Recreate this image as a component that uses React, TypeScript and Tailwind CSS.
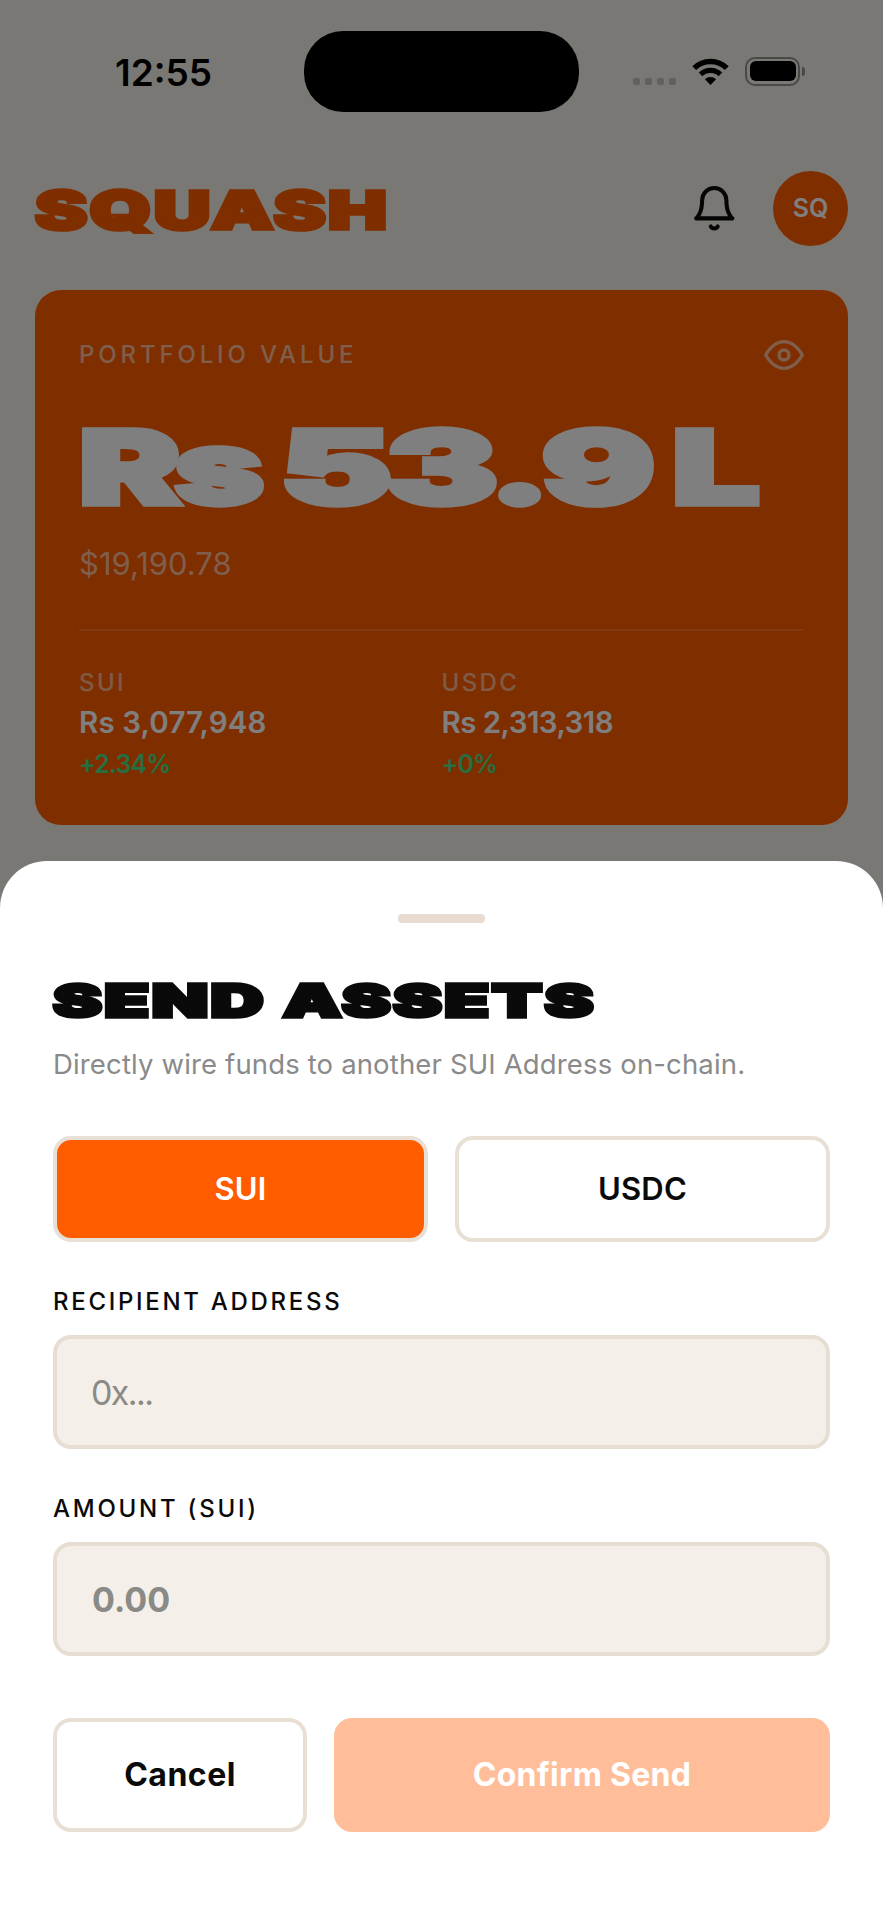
import { useState } from 'react';
import clsx from 'clsx';

const holdings = [
    { symbol: 'SUI', value: 'Rs 3,077,948', change: '+2.34%', valueClass: 'tracking-[0.15px]', changeClass: 'tracking-[-0.9px]' },
    { symbol: 'USDC', value: 'Rs 2,313,318', change: '+0%', valueClass: 'tracking-[-0.55px]', changeClass: 'tracking-[-0.9px]' },
];

function WifiIcon() {
    return (
        <svg width="37" height="27" viewBox="0 0 37 27" fill="none" stroke="black">
            <path d="M2.2 10.2a23 23 0 0 1 32.6 0" strokeWidth="5.4" />
            <path d="M8.6 16.4a14.2 14.2 0 0 1 19.8 0" strokeWidth="5.2" />
            <path d="M18.5 27l-5.6-5.7a8 8 0 0 1 11.2 0z" fill="black" stroke="none" />
        </svg>
    );
}

function BellIcon() {
    return (
        <svg width="48.5" height="48.5" viewBox="0 0 24 24" fill="none" stroke="#0a0a0a" strokeWidth="2" strokeLinecap="round" strokeLinejoin="round">
            <path d="M18 8A6 6 0 0 0 6 8c0 7-3 9-3 9h18s-3-2-3-9" />
            <path d="M13.73 21a2 2 0 0 1-3.46 0" />
        </svg>
    );
}

function EyeIcon() {
    return (
        <svg width="40" height="40" viewBox="0 0 24 24" fill="none" stroke="white" strokeOpacity="0.6" strokeWidth="2" strokeLinecap="round" strokeLinejoin="round">
            <path d="M1 12s4-8 11-8 11 8 11 8-4 8-11 8-11-8-11-8z" />
            <circle cx="12" cy="12" r="3" />
        </svg>
    );
}

function StatusBar() {
    return (
        <div className="grid h-[142px] grid-cols-[304px_275px_1fr] items-center">
            <span className="pt-0.5 pl-[115px] text-[37px] leading-none font-semibold text-black">12:55</span>
            <div className="h-[81px] rounded-[39px] bg-black" />
            <div className="flex h-[28px] items-center pl-[54px]">
                <div className="flex gap-[5px] self-end">
                    {[0, 1, 2, 3].map((i) => (
                        <span key={i} className="size-[7px] rounded-[2px] bg-black/20" />
                    ))}
                </div>
                <div className="ml-4"><WifiIcon /></div>
                <div className="ml-4 flex h-[29px] w-[55px] rounded-[10px] border-2 border-black/40 p-[2.5px]">
                    <div className="flex-1 rounded-[6px] bg-black" />
                </div>
                <div className="ml-0.5 h-[9px] w-[3px] rounded-r-full bg-black/40" />
            </div>
        </div>
    );
}

function PortfolioCard() {
    return (
        <div className="mx-[35px] mt-11 h-[535px] rounded-[26px] bg-[#ff5c00] px-11 pt-[45px]">
            <div className="flex h-10 items-center justify-between">
                <span className="text-[24px] font-medium tracking-[3.85px] text-white/60">PORTFOLIO VALUE</span>
                <EyeIcon />
            </div>

            <div className="mt-[38px] flex h-[108px] items-center text-[102px] leading-none font-black tracking-[-4px] whitespace-nowrap text-white [-webkit-text-stroke:5.5px_white]">
                <span className="w-[201px] origin-left scale-x-[1.49]">Rs </span>
                <span className="w-[392px] origin-left scale-x-[1.65]">53.9 </span>
                <span className="origin-left scale-x-[1.52]">L</span>
            </div>
            <p className="mt-[23px] h-10 text-[31px] leading-10 text-white/60">$19,190.78</p>

            <div className="mt-[45px] grid grid-cols-2 border-t-2 border-white/15 pt-[36px]">
                {holdings.map((h) => (
                    <div key={h.symbol}>
                        <p className="text-[24px] leading-8 font-medium tracking-[2.4px] text-white/55">{h.symbol}</p>
                        <p className={clsx('mt-[3px] text-[29.5px] leading-10 font-semibold text-white', h.valueClass)}>{h.value}</p>
                        <p className={clsx('mt-1.5 text-[25px] leading-8 font-semibold text-[#4ade80]', h.changeClass)}>{h.change}</p>
                    </div>
                ))}
            </div>
        </div>
    );
}

export default function App() {
    const [asset, setAsset] = useState('SUI');

    return (
        <div className="relative h-[1920px] w-[883px] overflow-hidden bg-[#f5f0e8] font-[Inter,sans-serif]">
            <StatusBar />

            {/* Header */}
            <header className="mt-[29px] flex h-[75px] items-center justify-between px-[35px]">
                <h1 className="origin-left scale-x-[1.51] pt-[5px] text-[52px] leading-none font-black tracking-[1.5px] text-[#ff5c00] [-webkit-text-stroke:3.5px_#ff5c00]">SQUASH</h1>
                <div className="flex items-center gap-[35px]">
                    <BellIcon />
                    <div className="flex size-[75px] items-center justify-center rounded-full bg-[#ff5c00] text-[25px] font-semibold text-white">SQ</div>
                </div>
            </header>

            <PortfolioCard />

            <div className="absolute inset-0 bg-black/50" />

            {/* Send sheet */}
            <section className="absolute inset-x-0 bottom-0 h-[1059px] rounded-t-[47px] bg-white px-[53px] pt-[53px] text-[#0a0a0a]">
                <div className="mx-auto h-[9px] w-[87px] rounded-[4px] bg-[#e8dcd2]" />
                <h2 className="mt-[53px] w-fit origin-left scale-x-[1.63] text-[45px] leading-[50px] font-black tracking-[1.5px] whitespace-nowrap [-webkit-text-stroke:3.5px_#0a0a0a]">SEND ASSETS</h2>
                <p className="mt-[20px] text-[27.5px] leading-9 tracking-[0.15px] whitespace-nowrap text-[#8a8a8a]">Directly wire funds to another SUI Address on-chain.</p>

                <div className="mt-[54px] grid grid-cols-2 gap-[27px]">
                    {['SUI', 'USDC'].map((a) => (
                        <button
                            key={a}
                            onClick={() => setAsset(a)}
                            className={clsx(
                                'h-[106px] rounded-[18px] border-4 border-[#e8dfd5] text-[31px] font-semibold tracking-[0.2px]',
                                asset === a ? 'bg-[#ff5c00] text-white' : 'bg-white'
                            )}
                        >
                            {a}
                        </button>
                    ))}
                </div>

                <p className="mt-[45px] text-[24px] leading-[30px] font-medium tracking-[2.7px]">RECIPIENT ADDRESS</p>
                <div className="mt-[18px] flex h-[114px] items-center rounded-[18px] border-4 border-[#e6ddd3] bg-[#f5efe9] px-[34px] text-[34px] tracking-[-1.6px] text-[#8a8a86]">0x...</div>

                <p className="mt-[45px] text-[24px] leading-[30px] font-medium tracking-[2.75px]">AMOUNT ({asset})</p>
                <div className="mt-[18px] flex h-[114px] items-center rounded-[18px] border-4 border-[#e6ddd3] bg-[#f5efe9] px-[35px] text-[34px] font-bold text-[#8a8a86]">0.00</div>

                <div className="mt-[62px] grid grid-cols-[254px_1fr] gap-[27px] text-[32px] font-bold">
                    <button className="h-[114px] rounded-[18px] border-4 border-[#e8dfd5] tracking-[0.5px]">Cancel</button>
                    <button className="h-[114px] rounded-[18px] bg-[#ffbe99] tracking-[0.3px] text-white">Confirm Send</button>
                </div>
            </section>
        </div>
    );
}
